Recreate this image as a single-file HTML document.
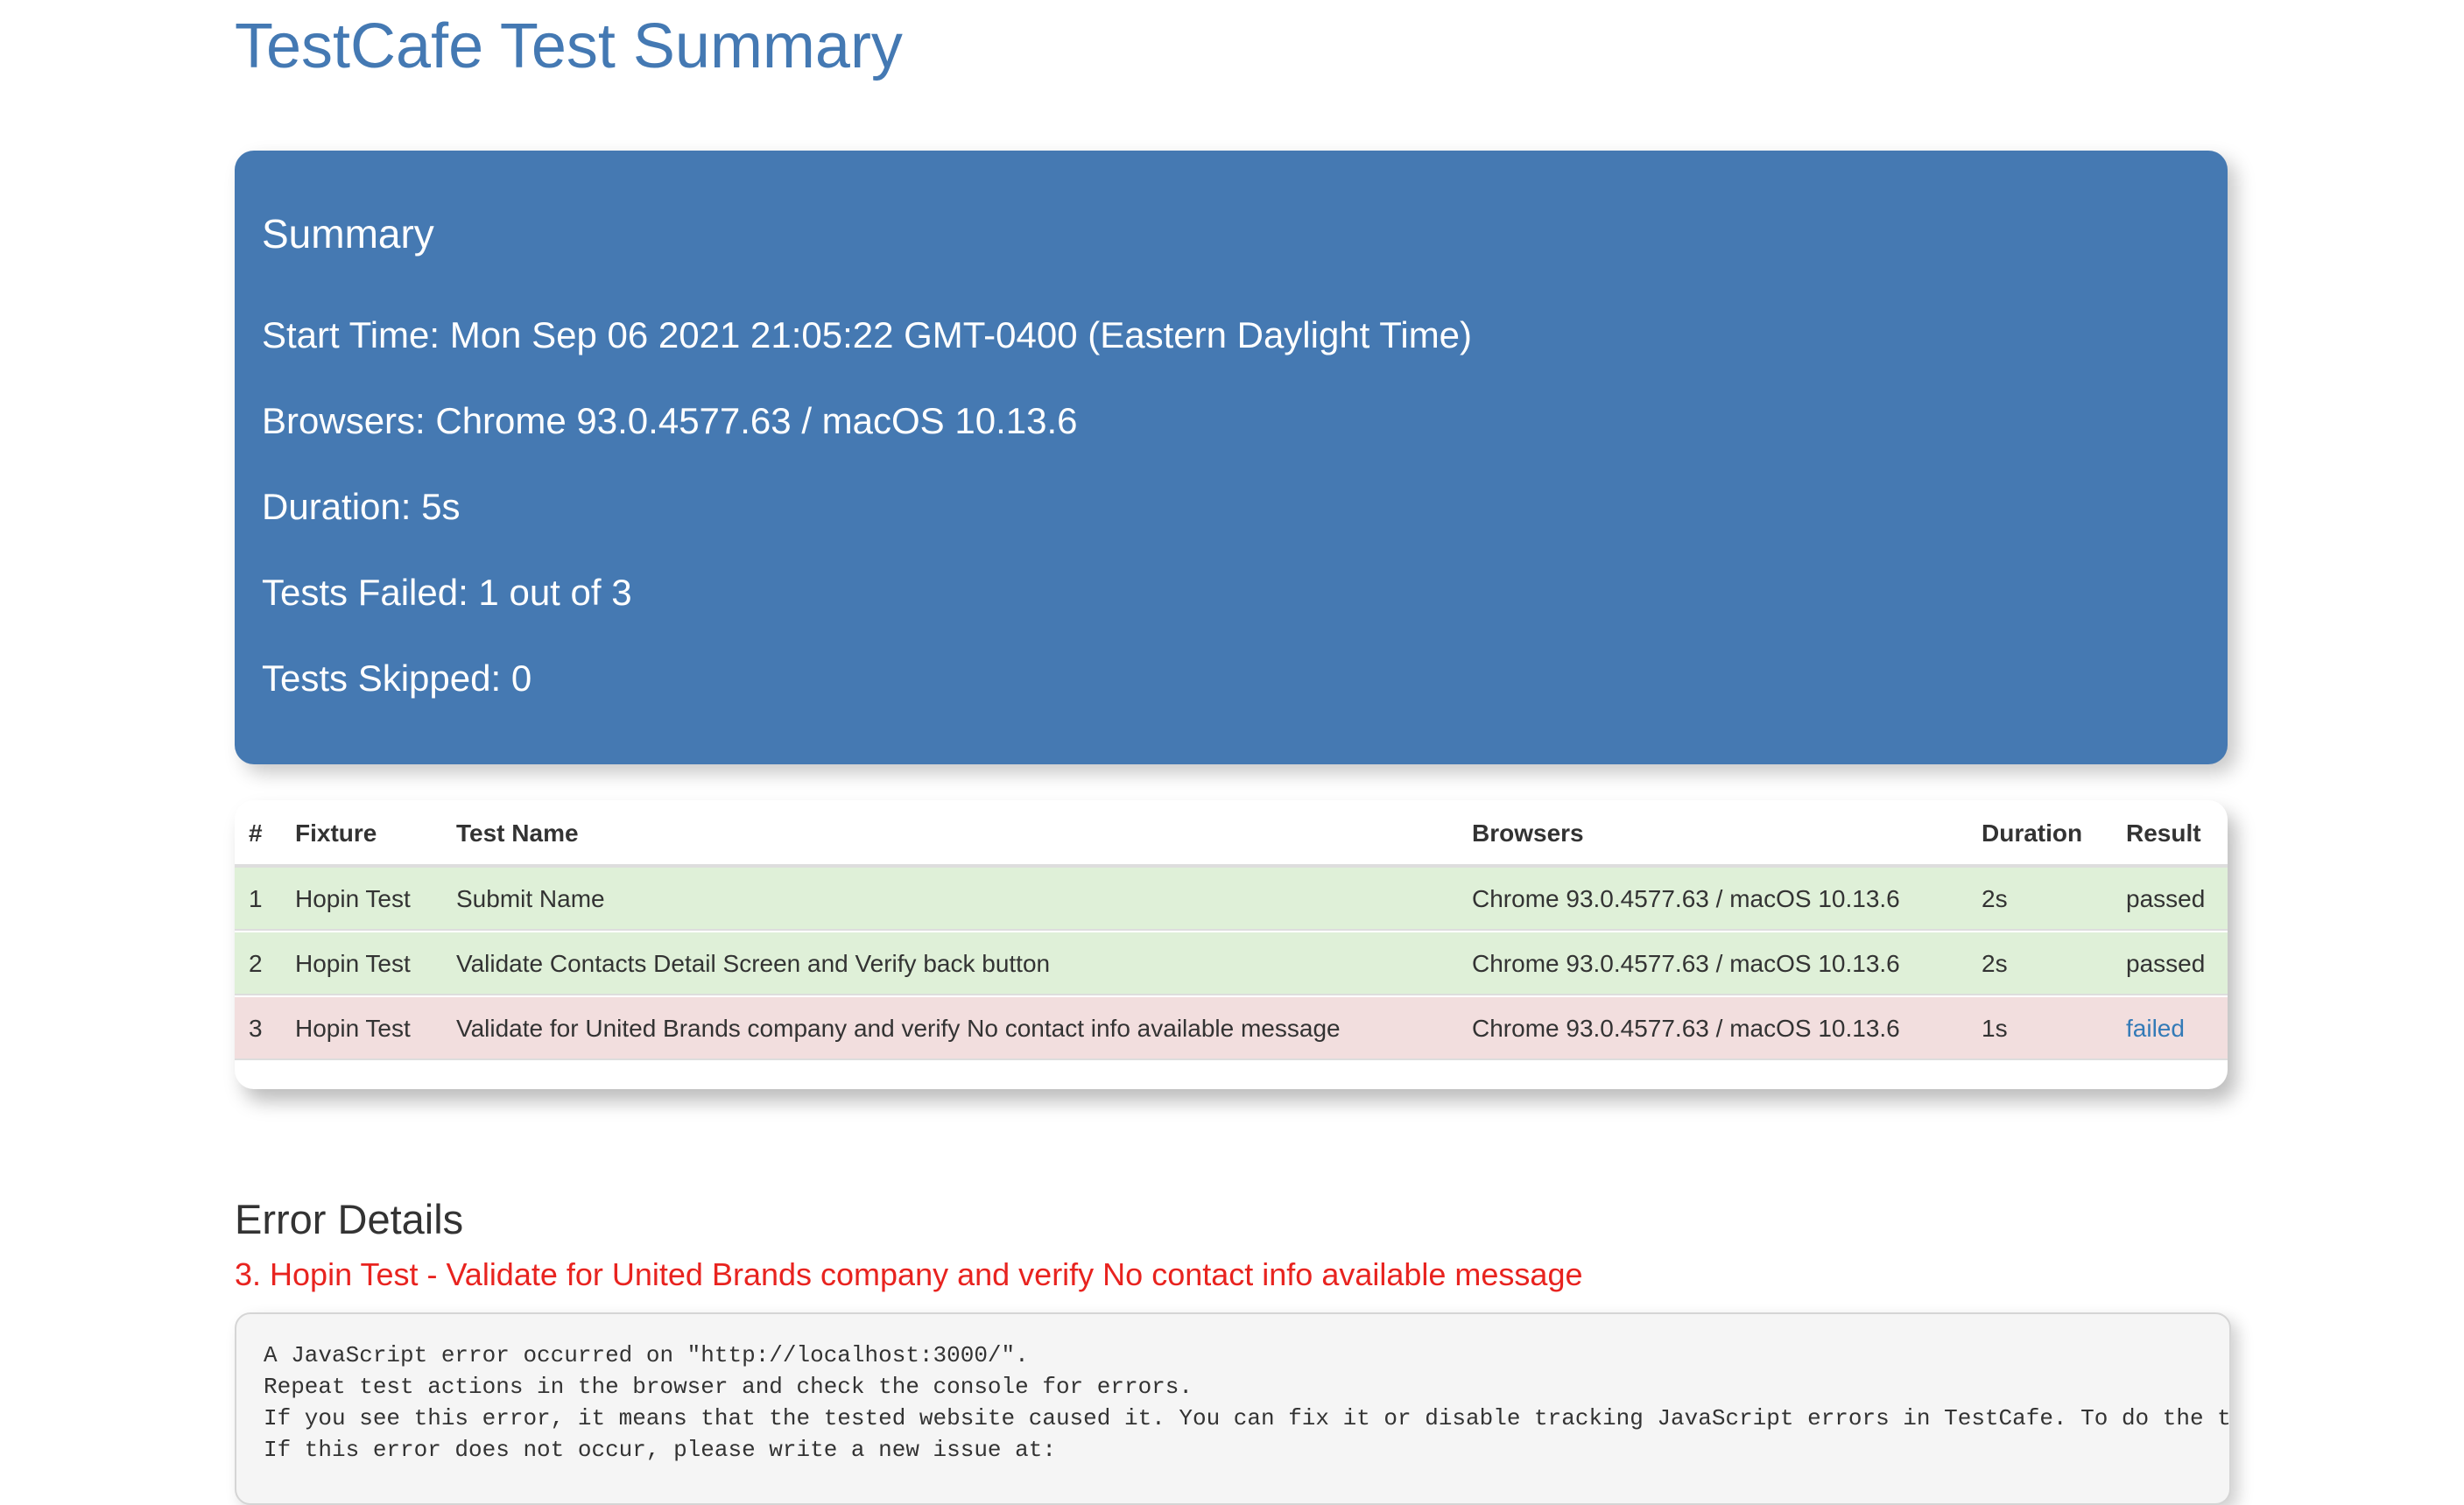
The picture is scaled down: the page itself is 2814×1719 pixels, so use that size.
<!DOCTYPE html>
<html><head><meta charset="utf-8"><style>
*{margin:0;padding:0;box-sizing:border-box}
body{width:2814px;height:1656px;overflow:hidden;background:#fff;font-family:"Liberation Sans",Arial,sans-serif;color:#333;position:relative}
.a{position:absolute;line-height:1;white-space:nowrap}
.panel{position:absolute;left:268px;top:172px;width:2276px;height:701px;background:#4579b2;border-radius:22px;box-shadow:10px 10px 22px #c8c8c8}
.tbl{position:absolute;left:268px;top:914px;width:2276px;height:330px;background:#fff;border-radius:22px;box-shadow:10px 14px 22px #bdbdbd;overflow:hidden}
.row{position:absolute;left:0;width:2276px}
.pre{position:absolute;left:268px;top:1499px;width:2280px;height:220px;background:#f5f5f5;border:2px solid #d5d5d5;border-radius:18px;box-shadow:8px 8px 18px #d0d0d0;overflow:hidden}
.pre div{position:absolute;left:31px;font-family:"Liberation Mono","DejaVu Sans Mono",monospace;font-size:26px;line-height:36px;white-space:pre;color:#333}
.w{color:#fff;font-size:42px}
.t{font-size:28px}
.h{font-size:28px;font-weight:bold}
</style></head><body>
<div class="a" style="left:268px;top:17px;font-size:72px;color:#4479b3">TestCafe Test Summary</div>
<div class="panel"></div>
<div class="a w" style="left:299px;top:244px;font-size:46px">Summary</div>
<div class="a w" style="left:299px;top:362px">Start Time: Mon Sep 06 2021 21:05:22 GMT-0400 (Eastern Daylight Time)</div>
<div class="a w" style="left:299px;top:460px">Browsers: Chrome 93.0.4577.63 / macOS 10.13.6</div>
<div class="a w" style="left:299px;top:558px">Duration: 5s</div>
<div class="a w" style="left:299px;top:656px">Tests Failed: 1 out of 3</div>
<div class="a w" style="left:299px;top:754px">Tests Skipped: 0</div>
<div class="tbl">
<div class="row" style="top:73px;height:4px;background:#ddd"></div>
<div class="row" style="top:77px;height:72px;background:#dff0d8;border-bottom:2px solid #ddd"></div>
<div class="row" style="top:151px;height:72px;background:#dff0d8;border-bottom:2px solid #ddd"></div>
<div class="row" style="top:225px;height:72px;background:#f2dede;border-bottom:2px solid #ddd"></div>
</div>
<div class="a h" style="left:284px;top:938px">#</div>
<div class="a h" style="left:337px;top:938px">Fixture</div>
<div class="a h" style="left:521px;top:938px">Test Name</div>
<div class="a h" style="left:1681px;top:938px">Browsers</div>
<div class="a h" style="left:2263px;top:938px">Duration</div>
<div class="a h" style="left:2428px;top:938px">Result</div>

<div class="a t" style="left:284px;top:1013px">1</div>
<div class="a t" style="left:337px;top:1013px">Hopin Test</div>
<div class="a t" style="left:521px;top:1013px">Submit Name</div>
<div class="a t" style="left:1681px;top:1013px">Chrome 93.0.4577.63 / macOS 10.13.6</div>
<div class="a t" style="left:2263px;top:1013px">2s</div>
<div class="a t" style="left:2428px;top:1013px">passed</div>

<div class="a t" style="left:284px;top:1087px">2</div>
<div class="a t" style="left:337px;top:1087px">Hopin Test</div>
<div class="a t" style="left:521px;top:1087px">Validate Contacts Detail Screen and Verify back button</div>
<div class="a t" style="left:1681px;top:1087px">Chrome 93.0.4577.63 / macOS 10.13.6</div>
<div class="a t" style="left:2263px;top:1087px">2s</div>
<div class="a t" style="left:2428px;top:1087px">passed</div>

<div class="a t" style="left:284px;top:1161px">3</div>
<div class="a t" style="left:337px;top:1161px">Hopin Test</div>
<div class="a t" style="left:521px;top:1161px">Validate for United Brands company and verify No contact info available message</div>
<div class="a t" style="left:1681px;top:1161px">Chrome 93.0.4577.63 / macOS 10.13.6</div>
<div class="a t" style="left:2263px;top:1161px">1s</div>
<div class="a t" style="left:2428px;top:1161px;color:#337ab7">failed</div>

<div class="a" style="left:268px;top:1369px;font-size:47px;color:#333">Error Details</div>
<div class="a" style="left:268px;top:1438px;font-size:36px;color:#e8231f">3. Hopin Test - Validate for United Brands company and verify No contact info available message</div>
<div class="pre">
<div style="top:29px">A JavaScript error occurred on "http://localhost:3000/".</div>
<div style="top:65px">Repeat test actions in the browser and check the console for errors.</div>
<div style="top:101px">If you see this error, it means that the tested website caused it. You can fix it or disable tracking JavaScript errors in TestCafe. To do the task, use the</div>
<div style="top:137px">If this error does not occur, please write a new issue at:</div>
</div>
</body></html>
